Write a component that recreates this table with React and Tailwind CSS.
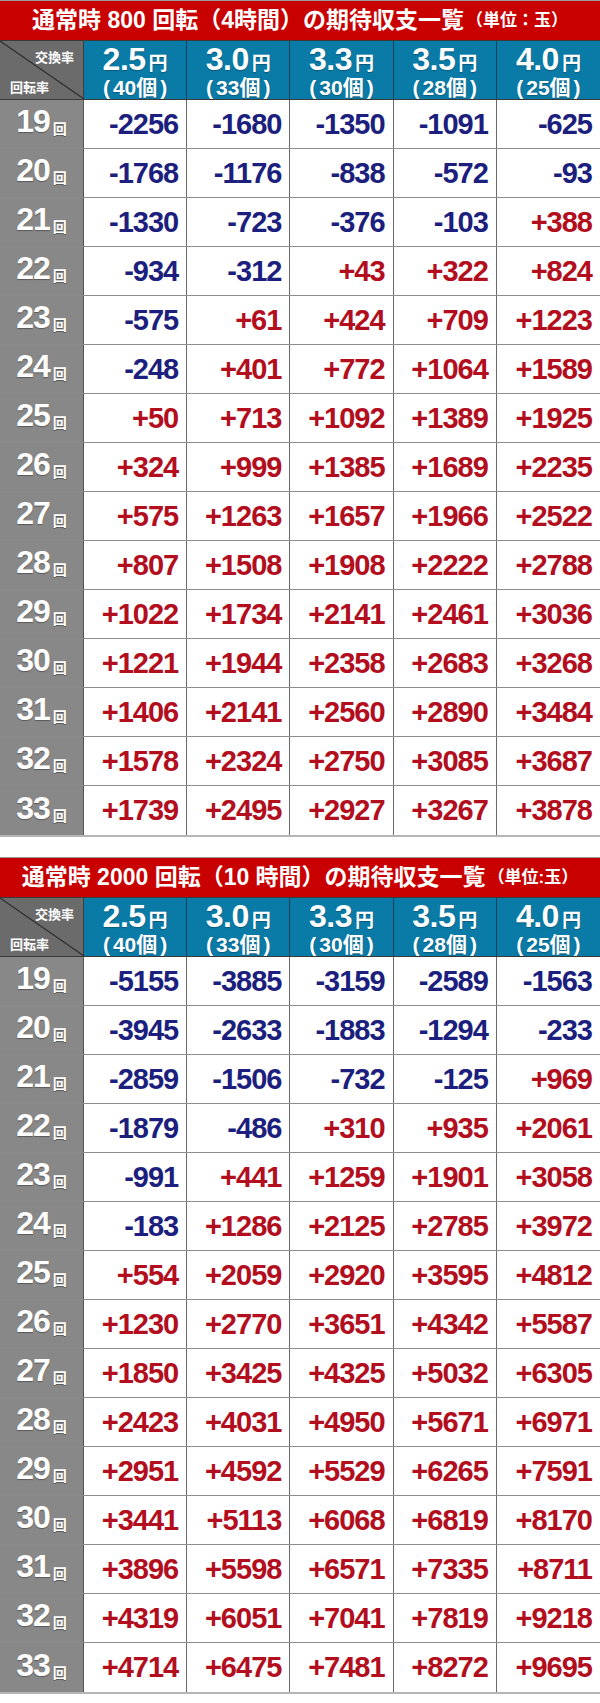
import React from "react";

const T1 = {
  title: ["通常時 800 回転（4時間）の期待収支一覧", "（単位：玉）"],
  rows: [
    ["-2256", "-1680", "-1350", "-1091", "-625"],
    ["-1768", "-1176", "-838", "-572", "-93"],
    ["-1330", "-723", "-376", "-103", "+388"],
    ["-934", "-312", "+43", "+322", "+824"],
    ["-575", "+61", "+424", "+709", "+1223"],
    ["-248", "+401", "+772", "+1064", "+1589"],
    ["+50", "+713", "+1092", "+1389", "+1925"],
    ["+324", "+999", "+1385", "+1689", "+2235"],
    ["+575", "+1263", "+1657", "+1966", "+2522"],
    ["+807", "+1508", "+1908", "+2222", "+2788"],
    ["+1022", "+1734", "+2141", "+2461", "+3036"],
    ["+1221", "+1944", "+2358", "+2683", "+3268"],
    ["+1406", "+2141", "+2560", "+2890", "+3484"],
    ["+1578", "+2324", "+2750", "+3085", "+3687"],
    ["+1739", "+2495", "+2927", "+3267", "+3878"],
  ],
};

const T2 = {
  title: ["通常時 2000 回転（10 時間）の期待収支一覧", "（単位:玉）"],
  rows: [
    ["-5155", "-3885", "-3159", "-2589", "-1563"],
    ["-3945", "-2633", "-1883", "-1294", "-233"],
    ["-2859", "-1506", "-732", "-125", "+969"],
    ["-1879", "-486", "+310", "+935", "+2061"],
    ["-991", "+441", "+1259", "+1901", "+3058"],
    ["-183", "+1286", "+2125", "+2785", "+3972"],
    ["+554", "+2059", "+2920", "+3595", "+4812"],
    ["+1230", "+2770", "+3651", "+4342", "+5587"],
    ["+1850", "+3425", "+4325", "+5032", "+6305"],
    ["+2423", "+4031", "+4950", "+5671", "+6971"],
    ["+2951", "+4592", "+5529", "+6265", "+7591"],
    ["+3441", "+5113", "+6068", "+6819", "+8170"],
    ["+3896", "+5598", "+6571", "+7335", "+8711"],
    ["+4319", "+6051", "+7041", "+7819", "+9218"],
    ["+4714", "+6475", "+7481", "+8272", "+9695"],
  ],
};

const HEAD = [
  ["2.5", "40"],
  ["3.0", "33"],
  ["3.3", "30"],
  ["3.5", "28"],
  ["4.0", "25"],
];

const FONT = { fontFamily: '"Liberation Sans", "Noto Sans CJK JP", sans-serif' };

function Table({ data }) {
  return (
    <div className="w-[600px] border-b-2 border-[#b5b5b5]" style={FONT}>
      <div className="h-10 bg-[#c90000] border-t border-[#9a9a9a] flex items-center justify-center text-white font-bold whitespace-nowrap">
        <span className="text-[23px] leading-none">{data.title[0]}</span>
        <span className="text-[17px] leading-none ml-[2px]">{data.title[1]}</span>
      </div>
      <div className="grid grid-cols-[84px_repeat(5,1fr)] h-[60px] border-t border-[#3a3a3a] border-b border-[#3a3a3a]">
        <div className="relative bg-[#6b6b6b] border-r border-[#3e3e3e] text-white font-bold text-[13px] leading-none">
          <svg className="absolute inset-0" width="84" height="58" viewBox="0 0 84 58">
            <line x1="0" y1="0" x2="84" y2="58" stroke="#2e2e2e" strokeWidth="1.2" />
          </svg>
          <span className="absolute right-[9px] top-[10px]">交換率</span>
          <span className="absolute left-[10px] bottom-[5px]">回転率</span>
        </div>
        {HEAD.map((h, i) => (
          <div
            key={i}
            className={`bg-[#0a7aa6] flex flex-col items-center justify-center text-white font-bold leading-none [text-shadow:0_1px_1px_rgba(0,0,0,0.25)] ${i < 4 ? "border-r border-[#15405a]" : ""}`}
          >
            <div className="flex items-end">
              <span className="text-[32px] tracking-[-0.5px]">{h[0]}</span>
              <span className="text-[19px] ml-[3px] mb-[2px]">円</span>
            </div>
            <div className="text-[21px] mt-[2px] flex items-center">
              <span className="mr-[3px]">(</span>
              <span>{h[1]}</span>
              <span>個</span>
              <span className="ml-[3px]">)</span>
            </div>
          </div>
        ))}
      </div>
      {data.rows.map((r, ri) => (
        <div
          key={ri}
          className={`grid grid-cols-[84px_repeat(5,1fr)] h-[49px] ${ri < data.rows.length - 1 ? "border-b border-[#8c8c8c]" : ""}`}
        >
          <div className="bg-[#888888] border-r border-[#555555] flex items-end justify-center pb-[11px] text-white font-bold leading-none [text-shadow:0_1px_1px_rgba(0,0,0,0.35)]">
            <span className="text-[32px] tracking-[-1px]">{19 + ri}</span>
            <span className="text-[14px] ml-[3px] mb-[1px]">回</span>
          </div>
          {r.map((v, ci) => (
            <div
              key={ci}
              className={`bg-white flex items-center justify-end pr-2 font-bold text-[29px] tracking-[-1px] leading-none ${ci < 4 ? "border-r border-[#6a6a6a]" : ""} ${v.startsWith("-") ? "text-[#1c1f7d]" : "text-[#b20e1e]"}`}
            >
              {v}
            </div>
          ))}
        </div>
      ))}
    </div>
  );
}

export default function App() {
  return (
    <div className="w-[600px] h-[1703px] bg-white flex flex-col gap-5">
      <Table data={T1} />
      <Table data={T2} />
    </div>
  );
}
